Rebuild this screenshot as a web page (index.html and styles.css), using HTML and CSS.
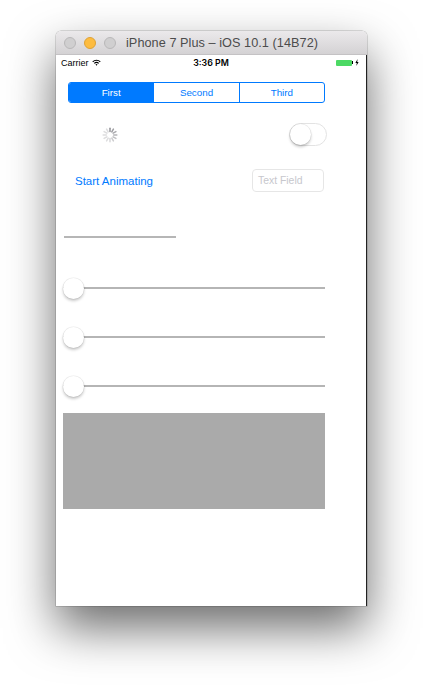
FILE: index.html
```html
<!DOCTYPE html>
<html>
<head>
<meta charset="utf-8">
<link rel="stylesheet" href="styles.css">
</head>
<body>
<div class="stage">
  <div class="window">
    <div class="titlebar">
      <div class="lights">
        <span class="light gray"></span>
        <span class="light orange"></span>
        <span class="light gray"></span>
      </div>
      <div class="title">iPhone 7 Plus – iOS 10.1 (14B72)</div>
    </div>
    <div class="screen">
      <div class="status">
        <div class="carrier">Carrier
          <svg class="wifi" width="9" height="7" viewBox="0 0 9 7"><path d="M0.3 2.4 A6 6 0 0 1 8.7 2.4 L7.9 3.2 A4.8 4.8 0 0 0 1.1 3.2 Z M1.9 4 A3.7 3.7 0 0 1 7.1 4 L6.3 4.8 A2.6 2.6 0 0 0 2.7 4.8 Z M3.5 5.6 A1.4 1.4 0 0 1 5.5 5.6 L4.5 6.7 Z" fill="#000"/></svg>
        </div>
        <div class="time">3:36 PM</div>
        <div class="battery">
          <span class="batt"></span><span class="nub"></span>
          <svg class="bolt" width="4" height="7" viewBox="0 0 4 7"><path d="M2.6 0 L0.4 3.9 H1.8 L1.3 7 L3.6 3 H2.2 Z" fill="#000"/></svg>
        </div>
      </div>
      <div class="segmented">
        <div class="seg active">First</div>
        <div class="seg">Second</div>
        <div class="seg">Third</div>
      </div>
      <div class="row row1">
        <svg class="spinner" width="16" height="16" viewBox="-8 -8 16 16">
          <g stroke="#8e8e93" stroke-width="1.5" stroke-linecap="round">
            <line x1="0" y1="-3.6" x2="0" y2="-6.8" opacity="0.95" transform="rotate(0)"/>
            <line x1="0" y1="-3.6" x2="0" y2="-6.8" opacity="0.85" transform="rotate(30)"/>
            <line x1="0" y1="-3.6" x2="0" y2="-6.8" opacity="0.75" transform="rotate(60)"/>
            <line x1="0" y1="-3.6" x2="0" y2="-6.8" opacity="0.65" transform="rotate(90)"/>
            <line x1="0" y1="-3.6" x2="0" y2="-6.8" opacity="0.55" transform="rotate(120)"/>
            <line x1="0" y1="-3.6" x2="0" y2="-6.8" opacity="0.45" transform="rotate(150)"/>
            <line x1="0" y1="-3.6" x2="0" y2="-6.8" opacity="0.35" transform="rotate(180)"/>
            <line x1="0" y1="-3.6" x2="0" y2="-6.8" opacity="0.3" transform="rotate(210)"/>
            <line x1="0" y1="-3.6" x2="0" y2="-6.8" opacity="0.3" transform="rotate(240)"/>
            <line x1="0" y1="-3.6" x2="0" y2="-6.8" opacity="0.3" transform="rotate(270)"/>
            <line x1="0" y1="-3.6" x2="0" y2="-6.8" opacity="0.3" transform="rotate(300)"/>
            <line x1="0" y1="-3.6" x2="0" y2="-6.8" opacity="0.3" transform="rotate(330)"/>
          </g>
        </svg>
        <div class="switch"><span class="knob"></span></div>
      </div>
      <div class="row row2">
        <div class="button">Start Animating</div>
        <div class="textfield">Text Field</div>
      </div>
      <div class="progress"></div>
      <div class="slider s1"><span class="thumb"></span><span class="track"></span></div>
      <div class="slider"><span class="thumb"></span><span class="track"></span></div>
      <div class="slider"><span class="thumb"></span><span class="track"></span></div>
      <div class="box"></div>
    </div>
  </div>
</div>
</body>
</html>
```
FILE: styles.css
```css
html, body {
  margin: 0;
  padding: 0;
  background: #ffffff;
}
body {
  width: 423px;
  height: 686px;
  overflow: hidden;
  font-family: "Liberation Sans", Arial, sans-serif;
}
.stage {
  padding: 31px 0 0 56px;
}
.window {
  width: 311px;
  border-radius: 5px 5px 0 0;
  box-shadow: 0 22px 48px rgba(0,0,0,0.58), 0 0 0 0.5px rgba(0,0,0,0.25);
  background: #fff;
  overflow: hidden;
}
.titlebar {
  height: 24px;
  box-sizing: border-box;
  background: linear-gradient(#ebe9eb, #d4d2d4);
  border-bottom: 1px solid #c4c2c4;
  display: flex;
  align-items: center;
  position: relative;
}
.lights {
  display: flex;
  gap: 8px;
  padding-left: 8px;
}
.light {
  width: 12px;
  height: 12px;
  border-radius: 50%;
  box-sizing: border-box;
}
.light.gray {
  background: #d0cfd0;
  border: 0.5px solid #b9b8b9;
}
.light.orange {
  background: #fdbc40;
  border: 0.5px solid #dea236;
}
.title {
  margin-left: 10px;
  font-size: 12.7px;
  color: #4c4c4c;
  letter-spacing: 0.05px;
}
.screen {
  height: 551px;
  background: #fff;
  display: flex;
  flex-direction: column;
  border-right: 1px solid #222;
  box-sizing: border-box;
  width: 311px;
}
.status {
  height: 15px;
  display: flex;
  align-items: center;
  position: relative;
  font-size: 9px;
  color: #000;
  padding: 0 6px 0 5px;
}
.carrier {
  display: flex;
  align-items: center;
  gap: 3px;
}
.time {
  position: absolute;
  left: 0;
  right: 0;
  text-align: center;
  font-family: Inter, "Liberation Sans", sans-serif;
  font-weight: 600;
  font-size: 8.8px;
  top: 2px;
}
.battery {
  margin-left: auto;
  display: flex;
  align-items: center;
  padding-right: 1px;
}
.batt {
  width: 16px;
  height: 6px;
  background: #4cd964;
  border-radius: 1px;
}
.nub {
  width: 1px;
  height: 3px;
  background: #000;
  margin-right: 2px;
}
.segmented {
  margin: 12px 0 0 12px;
  width: 257px;
  height: 21px;
  box-sizing: border-box;
  border: 1px solid #007aff;
  border-radius: 3px;
  display: flex;
  font-size: 9.8px;
  color: #007aff;
  overflow: hidden;
}
.seg {
  flex: 1;
  display: flex;
  align-items: center;
  justify-content: center;
  border-left: 1px solid #007aff;
}
.seg:first-child {
  border-left: none;
}
.seg.active {
  background: #007aff;
  color: #fff;
}
.row {
  display: flex;
  align-items: center;
  height: 23px;
}
.row1 {
  margin-top: 20px;
  padding-left: 46px;
}
.spinner {
  display: block;
}
.switch {
  margin-left: auto;
  margin-right: 39px;
  width: 38px;
  height: 23px;
  box-sizing: border-box;
  border: 1px solid #e3e3e3;
  border-radius: 12px;
  background: #fff;
  position: relative;
}
.knob {
  position: absolute;
  left: 0;
  top: 0;
  width: 21px;
  height: 21px;
  border-radius: 50%;
  background: #fff;
  box-shadow: 0 2px 3px rgba(0,0,0,0.22), 0 0 0 0.5px rgba(0,0,0,0.08);
}
.row2 {
  margin-top: 23px;
  padding-left: 19px;
}
.button {
  color: #007aff;
  font-size: 11.5px;
}
.textfield {
  margin-left: auto;
  margin-right: 42px;
  width: 72px;
  height: 23px;
  box-sizing: border-box;
  border: 0.5px solid #e6e6e6;
  border-radius: 4px;
  font-size: 10.4px;
  color: #c7c7cd;
  display: flex;
  align-items: center;
  padding-left: 5px;
}
.progress {
  margin: 44px 0 0 8px;
  width: 112px;
  height: 2px;
  background: #b6b6b6;
}
.slider {
  margin: 27px 0 0 7px;
  width: 262px;
  height: 22px;
  position: relative;
  display: flex;
  align-items: center;
}
.slider.s1 {
  margin-top: 39px;
}
.track {
  flex: 1;
  height: 1.5px;
  background: #b5b5b5;
}
.thumb {
  position: absolute;
  left: 0;
  top: 0.5px;
  width: 21px;
  height: 21px;
  border-radius: 50%;
  background: #fff;
  box-shadow: 0 2px 3px rgba(0,0,0,0.22), 0 0 0 0.5px rgba(0,0,0,0.08);
}
.box {
  margin: 16px 0 0 7px;
  width: 262px;
  height: 96px;
  background: #aaaaaa;
}
```
